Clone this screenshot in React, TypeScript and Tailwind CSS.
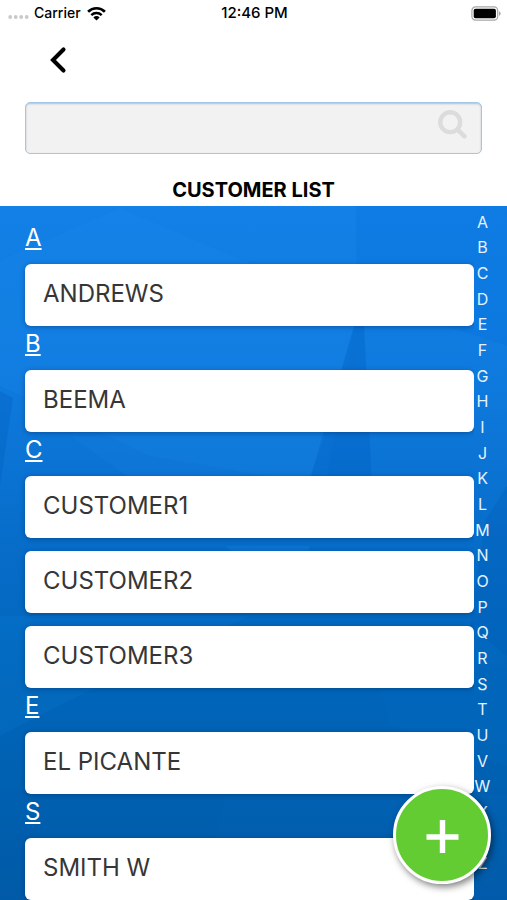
import React, { useState } from 'react';

interface CustomerSection {
  letter: string;
  customers: string[];
}

const SECTIONS: CustomerSection[] = [
  { letter: 'A', customers: ['ANDREWS'] },
  { letter: 'B', customers: ['BEEMA'] },
  { letter: 'C', customers: ['CUSTOMER1', 'CUSTOMER2', 'CUSTOMER3'] },
  { letter: 'E', customers: ['EL PICANTE'] },
  { letter: 'S', customers: ['SMITH W'] },
];

const ALPHABET = 'ABCDEFGHIJKLMNOPQRSTUVWXYZ'.split('');


// --- STATUS BAR ---

const StatusBar: React.FC = () => (
  <div className="grid grid-cols-3 items-center h-[26px] pl-2 pr-[6px] text-sm font-medium">
    <div className="flex items-center gap-[5px]">
      <svg width="21" height="6" viewBox="0 0 21 6" fill="#c9c9c9" className="mt-2" aria-hidden="true">
        <circle cx="2.2" cy="3" r="1.9" />
        <circle cx="7.7" cy="3" r="1.9" />
        <circle cx="13.2" cy="3" r="1.9" />
        <circle cx="18.7" cy="3" r="1.9" />
      </svg>
      <span>Carrier</span>
      <svg width="21" height="15" viewBox="0 0 20 15" aria-hidden="true">
        <path d="M1.6 5.7a12 12 0 0 1 16.8 0" fill="none" stroke="#000" strokeWidth="2.7" />
        <path d="M4.8 9.1a7.4 7.4 0 0 1 10.4 0" fill="none" stroke="#000" strokeWidth="2.4" />
        <path d="M10 14.4 6.9 11.4a4.4 4.4 0 0 1 6.2 0z" fill="#000" />
      </svg>
    </div>
    <span className="text-center text-[15px]">12:46 PM</span>
    <svg width="30" height="15" viewBox="0 0 30 15" className="justify-self-end" aria-hidden="true">
      <rect x="0.9" y="0.9" width="25.8" height="13.2" rx="3.6" fill="#fff" stroke="#a6a6a6" strokeWidth="1.2" />
      <rect x="2.7" y="2.7" width="22.2" height="9.6" rx="1.8" fill="#000" />
      <path d="M28 5.2c1.1.4 1.6 1.3 1.6 2.3s-.5 1.9-1.6 2.3z" fill="#a6a6a6" />
    </svg>
  </div>
);


// --- BACKGROUND ---

const Backdrop: React.FC = () => (
  <svg className="absolute inset-0 w-full h-full" viewBox="0 0 507 694" preserveAspectRatio="none" aria-hidden="true">
    <defs>
      <linearGradient id="sky" x1="0" y1="0" x2="0" y2="1">
        <stop offset="0" stopColor="#1280e6" />
        <stop offset="0.25" stopColor="#0f7ade" />
        <stop offset="0.5" stopColor="#066cc8" />
        <stop offset="0.7" stopColor="#0065b9" />
        <stop offset="1" stopColor="#005aa7" />
      </linearGradient>
    </defs>
    <rect width="507" height="694" fill="url(#sky)" />
    <path d="M0 55 120 2 260 62 356 118 325 280 150 250 0 180z" fill="#2a94f4" fillOpacity="0.13" />
    <path d="M356 0H507V140L440 118 357 118z" fill="#0070dc" fillOpacity="0.2" />
    <path d="M354 120 364 118 372 280 308 280z" fill="#0062c4" fillOpacity="0.4" />
    <path d="M0 185 13 192 0 280z" fill="#0060c0" fillOpacity="0.35" />
    <path d="M70 230 325 230 308 278 127 270z" fill="#1a87e4" fillOpacity="0.18" />
    <path d="M507 280 485 315 470 420 507 450z" fill="#0058b0" fillOpacity="0.25" />
    <path d="M225 340 310 340 306 352 240 352z" fill="#1a87e4" fillOpacity="0.25" />
    <path d="M0 410 250 410 95 482 0 530z" fill="#087bd2" fillOpacity="0.22" />
    <path d="M380 482H507V560L390 520z" fill="#0a74cc" fillOpacity="0.14" />
    <path d="M225 588H507V694H200z" fill="#0a6fc4" fillOpacity="0.1" />
  </svg>
);


// --- SEARCH ---

interface SearchBoxProps {
  value: string;
  onChange: (value: string) => void;
}

const SearchBox: React.FC<SearchBoxProps> = ({ value, onChange }) => (
  <label className="flex items-center h-[52px] pl-4 pr-[14px] bg-[#f2f2f2] border border-[#9fc8ea] rounded-[5px] shadow-[inset_0_1px_2px_#b4bfca]">
    <input
      type="search"
      aria-label="Search customers"
      value={value}
      onChange={(e) => onChange(e.target.value)}
      className="flex-1 min-w-0 bg-transparent text-xl outline-none appearance-none"
    />
    <svg width="29" height="29" viewBox="0 0 28 28" fill="none" stroke="#dcdcdc" className="mb-[7px]" aria-hidden="true">
      <circle cx="11.8" cy="11.8" r="9.6" strokeWidth="4.2" />
      <path d="M19 19 25.5 25.5" strokeWidth="4.4" strokeLinecap="round" />
    </svg>
  </label>
);


const App: React.FC = () => {
  const [query, setQuery] = useState('');

  const sections = SECTIONS
    .map(s => ({ ...s, customers: s.customers.filter(c => c.includes(query.trim().toUpperCase())) }))
    .filter(s => s.customers.length > 0);

  return (
    <div className="relative h-screen flex flex-col bg-white text-black overflow-hidden font-[Inter,'Liberation_Sans',sans-serif]">
      <StatusBar />
      <header className="flex flex-col">
        <div className="flex items-center h-[76px] px-[45px] pb-2">
          <button type="button" aria-label="Back" className="flex items-center justify-center w-6 h-8">
            <svg width="20" height="28" viewBox="0 0 20 28" fill="none" stroke="#000" strokeWidth="4.1" strokeLinecap="round" aria-hidden="true">
              <path d="M16.5 3.5 6 14 16.5 24.5" />
            </svg>
          </button>
        </div>
        <div className="px-[25px]">
          <SearchBox value={query} onChange={setQuery} />
        </div>
        <h1 className="pt-6 pb-1 text-center text-xl leading-6 font-bold">CUSTOMER LIST</h1>
      </header>

      <main className="relative flex-1 min-h-0 bg-[#0a70d0]">
        <Backdrop />
        <div className="relative flex h-full">
          <div className="flex-1 min-w-0 pl-[25px] pt-[14px] overflow-y-auto [scrollbar-width:none]">
            {sections.map(section => (
              <section key={section.letter} id={`section-${section.letter}`}>
                <h2 className="h-11 pt-[2px] text-2xl leading-8 text-white underline decoration-2 underline-offset-2">{section.letter}</h2>
                <ul className="flex flex-col gap-[13px]">
                  {section.customers.map(name => (
                    <li key={name}>
                      <button type="button" className="block w-full h-[62px] px-[18px] pb-[2px] text-left text-2xl text-[#363636] bg-white rounded-md shadow-[0_1px_5px_rgba(0,40,90,0.45)]">
                        {name}
                      </button>
                    </li>
                  ))}
                </ul>
              </section>
            ))}
          </div>
          <nav aria-label="Alphabet" className="flex flex-col w-[33px] pt-[3px] pb-6 pr-4 text-base text-[#e2f2ff]">
            {ALPHABET.map(letter => (
              <a key={letter} href={`#section-${letter}`} className="flex-1 min-h-0 flex items-center justify-center leading-5">{letter}</a>
            ))}
          </nav>
        </div>
      </main>

      <button
        type="button"
        aria-label="Add customer"
        className="absolute right-4 bottom-4 flex items-center justify-center w-[98px] h-[98px] rounded-full bg-[#63cc33] border-[3px] border-white shadow-[2px_3px_7px_rgba(0,0,0,0.5)]"
      >
        <svg width="34" height="36" viewBox="0 0 34 36" fill="none" stroke="#fff" strokeWidth="5.4" aria-hidden="true">
          <path d="M17.5 3V36M1.5 20H33.5" />
        </svg>
      </button>
    </div>
  );
};

export default App;
